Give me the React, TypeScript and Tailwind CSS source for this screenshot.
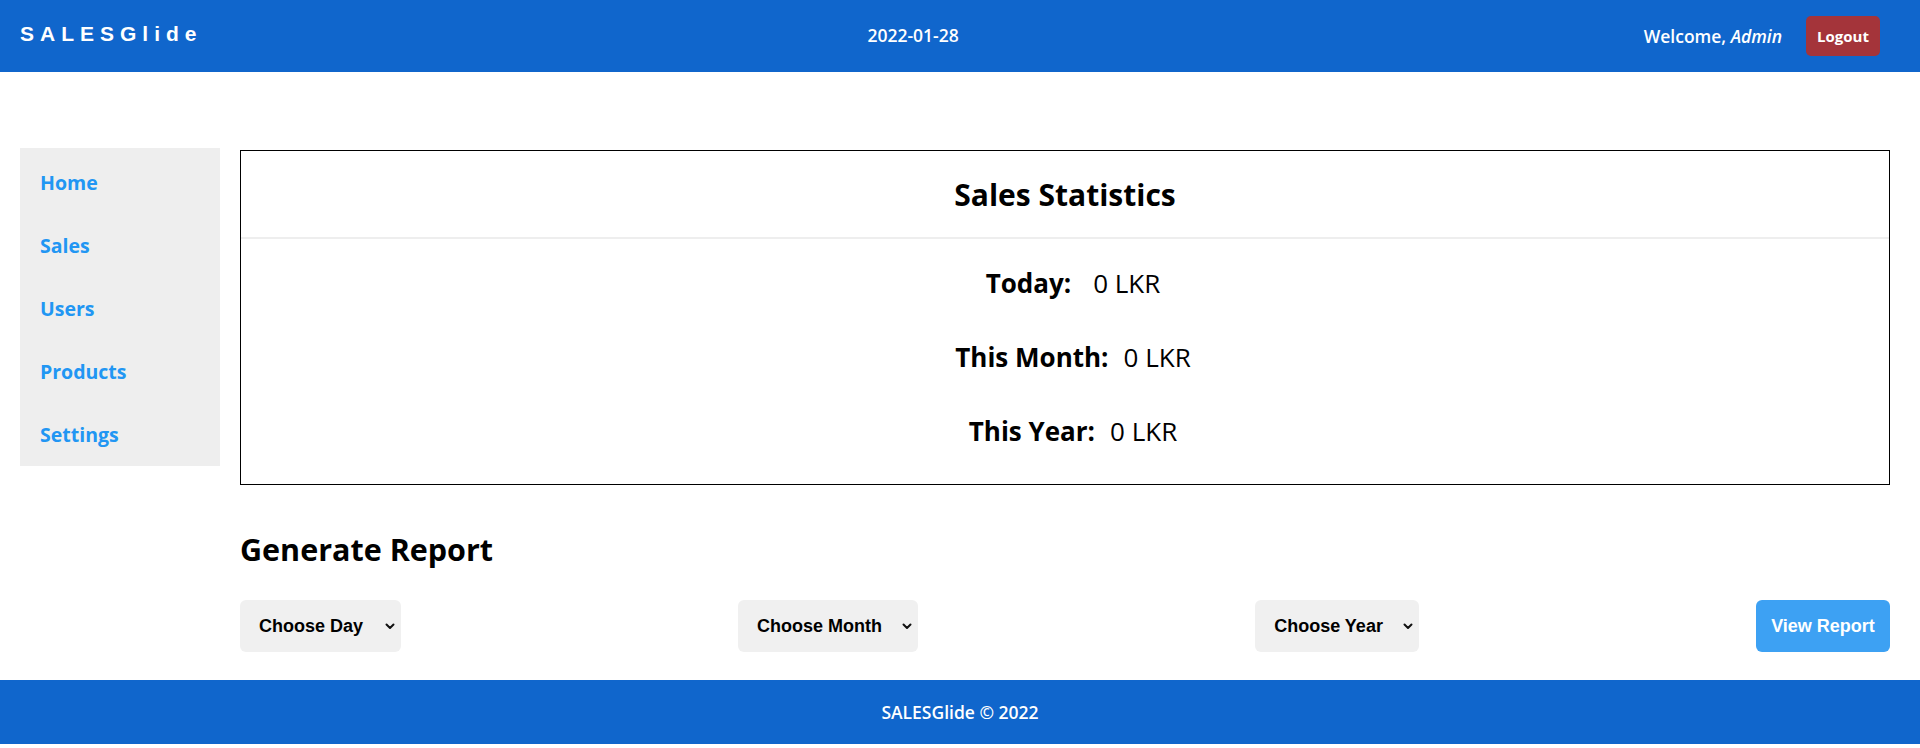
import React from "react";

function Chevron() {
  return (
    <svg width="10" height="7" viewBox="0 0 10 7" className="shrink-0">
      <path d="M1.5 1.5 L5 5 L8.5 1.5" fill="none" stroke="#111" strokeWidth="2" strokeLinecap="round" strokeLinejoin="round" />
    </svg>
  );
}

function Picker({ label, gap }: { label: string; gap: string }) {
  return (
    <button
      type="button"
      className={`h-[52px] flex items-center rounded-[6px] bg-[#f0f0f0] pl-[19px] pr-[6px] font-['Liberation_Sans',Arial,sans-serif] text-[18px] font-bold text-black ${gap}`}
    >
      <span>{label}</span>
      <Chevron />
    </button>
  );
}

export default function App() {
  const nav = ["Home", "Sales", "Users", "Products", "Settings"];
  return (
    <div className="min-h-screen bg-white font-['Open_Sans','Noto_Sans',sans-serif] text-black">
      <header className="h-[72px] bg-[#1066cc] flex items-center justify-between pl-5 pr-10 text-white">
        <div className="font-['Liberation_Sans',Arial,sans-serif] text-[21px] font-bold tracking-[6px] leading-none pb-[5px]">
          SALESGlide
        </div>
        <div className="mr-[20px] text-[17.5px] font-semibold pb-[2px]">2022-01-28</div>
        <div className="flex items-center gap-6">
          <span className="text-[17.5px] font-semibold">
            Welcome, <em className="italic">Admin</em>
          </span>
          <button type="button" className="h-10 w-[74px] rounded-[5px] bg-[#a4343a] text-[15px] font-bold text-white">
            Logout
          </button>
        </div>
      </header>

      <div className="flex gap-5 pl-5 pr-[30px] pt-[76px]">
        <nav className="w-[200px] self-start bg-[#eeeeee] pt-[3px] pb-0">
          {nav.map((n) => (
            <a key={n} href="#" className="h-[63px] flex items-center pl-5 text-[19.5px] font-bold text-[#2196f3]">
              {n}
            </a>
          ))}
        </nav>

        <main className="flex-1 pt-[2px]">
          <section className="border border-black">
            <div className="h-[88px] flex items-center justify-center border-b-2 border-[#eeeeee]">
              <h1 className="text-[30px] font-bold">Sales Statistics</h1>
            </div>
            <div className="pt-[7px] pb-[16px] pl-[16px] text-[26px]">
              <div className="h-[74px] flex items-center justify-center">
                <span className="font-bold">Today:</span>
                <span className="ml-[22px]">0 LKR</span>
              </div>
              <div className="h-[74px] flex items-center justify-center">
                <span className="font-bold">This Month:</span>
                <span className="ml-[15px]">0 LKR</span>
              </div>
              <div className="h-[74px] flex items-center justify-center">
                <span className="font-bold">This Year:</span>
                <span className="ml-[15px]">0 LKR</span>
              </div>
            </div>
          </section>

          <h2 className="mt-[44px] text-[30.5px] font-bold leading-[40px]">Generate Report</h2>

          <div className="mt-[31px] flex items-center justify-between">
            <Picker label="Choose Day" gap="gap-[22px]" />
            <Picker label="Choose Month" gap="gap-[20px]" />
            <Picker label="Choose Year" gap="gap-[20px]" />
            <button
              type="button"
              className="h-[52px] w-[134px] rounded-[6px] bg-[#3da1f3] font-['Liberation_Sans',Arial,sans-serif] text-[18px] font-bold text-white"
            >
              View Report
            </button>
          </div>
        </main>
      </div>

      <footer className="mt-[28px] h-16 bg-[#1066cc] flex items-center justify-center text-white text-[17.5px] font-semibold">
        SALESGlide © 2022
      </footer>
    </div>
  );
}
